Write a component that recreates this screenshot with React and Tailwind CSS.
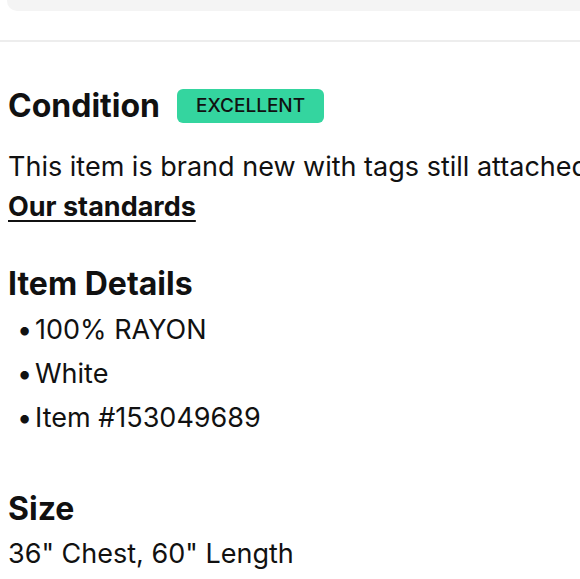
import React from 'react';

const details = ['100% RAYON', 'White', 'Item #153049689'];

function SectionTitle({ children, className = '' }) {
  return (
    <h2 className={`text-[32px] font-bold leading-[36px] text-[#111] ${className}`}>{children}</h2>
  );
}

export default function App() {
  return (
    <div
      className="h-[579px] w-[580px] overflow-hidden bg-white text-[#111]"
      style={{ fontFamily: 'Inter, "Noto Sans", sans-serif' }}
    >
      <div className="ml-[7px] h-[11px] rounded-bl-[10px] bg-[#f4f4f4]" />
      <div className="mt-[29px] h-[2px] bg-[#ededed]" />

      <div className="px-[8px]">
        <div className="mt-[46px] flex items-center gap-[17px]">
          <SectionTitle>Condition</SectionTitle>
          <span className="flex h-[34px] items-center rounded-[6px] bg-[#34d59f] px-[19px] text-[19px] font-medium text-[#111]">
            EXCELLENT
          </span>
        </div>

        <p className="mt-[23px] whitespace-nowrap text-[27px] leading-[40px]">
          This item is brand new with tags still attached.
        </p>
        <a href="#" className="block text-[27px] font-bold leading-[40px] underline underline-offset-[4px]">
          Our standards
        </a>

        <SectionTitle className="mt-[39px]">Item Details</SectionTitle>
        <ul className="mt-[6px]">
          {details.map((item) => (
            <li key={item} className="flex text-[27px] leading-[44px]">
              <span className="ml-[9px] w-[18px] shrink-0">•</span>
              <span>{item}</span>
            </li>
          ))}
        </ul>

        <SectionTitle className="mt-[51px]">Size</SectionTitle>
        <p className="mt-[7px] text-[27px] leading-[40px]">36" Chest, 60" Length</p>
      </div>
    </div>
  );
}
